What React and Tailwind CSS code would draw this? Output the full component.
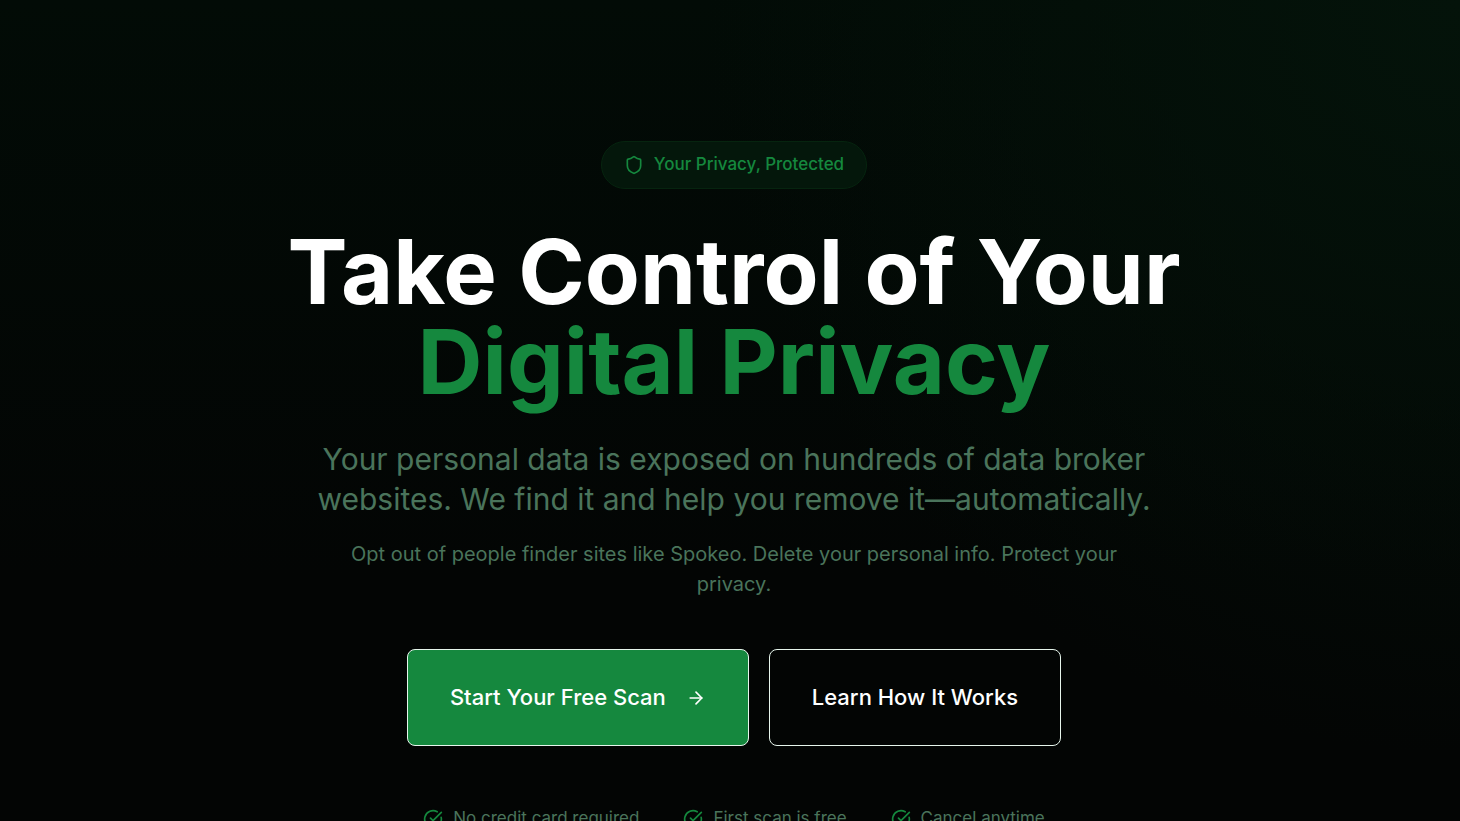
import { ArrowRight, CircleCheckBig, Shield } from "lucide-react";

const perks = ["No credit card required", "First scan is free", "Cancel anytime"];

export default function App() {
  return (
    <main className="h-screen overflow-hidden bg-[#030504] bg-[radial-gradient(circle_at_100%_0%,#04130a_0%,transparent_45%),linear-gradient(to_bottom,#020b06_0%,#030504_70%)] pl-2 font-['Inter',sans-serif]">
      <section className="mx-auto flex max-w-6xl flex-col items-center pt-[141px] text-center">
        <div className="flex h-12 items-center gap-2.5 rounded-full border border-[#06240f] bg-[#04170b] px-[22px] text-[17px] font-medium text-[#15883e]">
          <Shield size={20} strokeWidth={2} />
          <span>Your Privacy, Protected</span>
        </div>

        <h1 className="mt-[38px] text-[90px] leading-[90px] font-bold text-white">
          Take Control of Your
          <span className="block text-[#15883e]">Digital Privacy</span>
        </h1>

        <p className="mt-8 max-w-[840px] text-[30px] leading-10 text-[#4a745b]">
          Your personal data is exposed on hundreds of data broker websites. We
          find it and help you remove it—automatically.
        </p>
        <p className="mt-5 max-w-[800px] text-[20px] leading-[30px] text-[#4a745b]">
          Opt out of people finder sites like Spokeo. Delete your personal info.
          Protect your privacy.
        </p>

        <div className="mt-[50px] flex gap-5">
          <button className="flex h-[97px] items-center gap-5 rounded-lg border border-[#e6f5ec] bg-[#15883e] px-[42px] text-[22px] font-medium text-white">
            Start Your Free Scan
            <ArrowRight size={20} strokeWidth={2} />
          </button>
          <button className="h-[97px] rounded-lg border border-[#e6f5ec] px-[42px] text-[22px] font-medium text-white">
            Learn How It Works
          </button>
        </div>

        <ul className="mt-[60px] flex gap-11 text-[17px] text-[#4a745b]">
          {perks.map((perk) => (
            <li key={perk} className="flex items-center gap-2.5">
              <CircleCheckBig size={20} className="text-[#15883e]" />
              {perk}
            </li>
          ))}
        </ul>
      </section>
    </main>
  );
}
